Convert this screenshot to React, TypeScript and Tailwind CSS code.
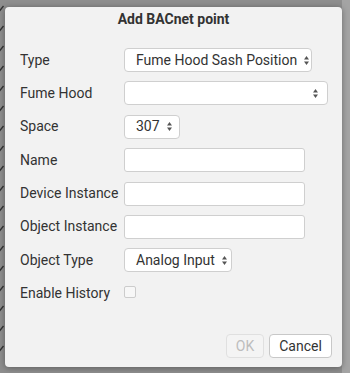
import React from 'react';

function Arrows() {
  return (
    <svg width="7" height="11" viewBox="0 0 7 11" className="shrink-0 ml-[6px]">
      <path d="M3.5 1 L6 4.5 L1 4.5 Z" fill="#555" />
      <path d="M3.5 10 L6 6.5 L1 6.5 Z" fill="#555" />
    </svg>
  );
}

function Select({ value, width }: { value: string; width: string }) {
  return (
    <div
      className={`${width} h-[24px] shrink-0 flex items-center justify-between pl-[11px] pr-[8px] bg-white border border-[#cfcfcf] rounded-[4px] text-[14px] text-[#333]`}
    >
      <span className="whitespace-nowrap">{value}</span>
      <Arrows />
    </div>
  );
}

function Input() {
  return <div className="w-[181px] h-[24px] shrink-0 bg-white border border-[#cfcfcf] rounded-[3px]" />;
}

function Row({ label, children }: { label: string; children: React.ReactNode }) {
  return (
    <div className="flex items-center h-[24px]">
      <div className="w-[119px] shrink-0 pl-[15px] text-[14px] text-[#333] whitespace-nowrap">{label}</div>
      {children}
    </div>
  );
}

export default function App() {
  const checks = Array.from({ length: 18 });

  return (
    <div
      className="relative w-[350px] h-[373px] overflow-hidden bg-[#8e8e8e]"
      style={{ fontFamily: 'Roboto, "Liberation Sans", sans-serif' }}
    >
      {/* page behind the modal */}
      <div className="flex flex-col gap-[10px] pt-[3px] -ml-[5px]">
        {checks.map((_, i) => (
          <svg key={i} width="10" height="10" viewBox="0 0 10 10">
            <path d="M2 5.5 L4.5 8 L8.5 3" stroke="#333" strokeWidth="1.3" fill="none" />
          </svg>
        ))}
      </div>
      <div className="absolute top-0 right-0 w-[8px] h-full bg-[#a4a4a4]" />

      {/* dialog */}
      <div className="absolute left-[5px] top-[7px] w-[337px] h-[360px] bg-[#f2f2f2] rounded-[4px] shadow-[0_1px_6px_rgba(0,0,0,0.35)] flex flex-col">
        <div className="pt-[3px] h-[21px] text-center text-[14px] font-bold text-[#333] leading-[18px]">
          Add BACnet point
        </div>

        <div className="flex flex-col gap-[9.4px] pt-[20px]">
          <Row label="Type">
            <Select value="Fume Hood Sash Position" width="w-[188px]" />
          </Row>
          <Row label="Fume Hood">
            <Select value="" width="w-[204px]" />
          </Row>
          <Row label="Space">
            <Select value="307" width="w-[56px]" />
          </Row>
          <Row label="Name">
            <Input />
          </Row>
          <Row label="Device Instance">
            <Input />
          </Row>
          <Row label="Object Instance">
            <Input />
          </Row>
          <Row label="Object Type">
            <Select value="Analog Input" width="w-[108px]" />
          </Row>
          <Row label="Enable History">
            <div className="w-[12px] h-[12px] shrink-0 bg-[#f7f7f7] border border-[#cccccc] rounded-[2px] -mt-[4px]" />
          </Row>
        </div>

        <div className="mt-auto mb-[9px] mr-[10px] flex justify-end gap-[5px]">
          <button className="w-[38px] h-[24px] bg-[#f4f4f4] border border-[#e0e0e0] rounded-[4px] text-[14px] text-[#bdbdbd]">
            OK
          </button>
          <button className="w-[63px] h-[24px] bg-white border border-[#c8c8c8] rounded-[4px] text-[14px] text-[#333]">
            Cancel
          </button>
        </div>
      </div>
    </div>
  );
}
